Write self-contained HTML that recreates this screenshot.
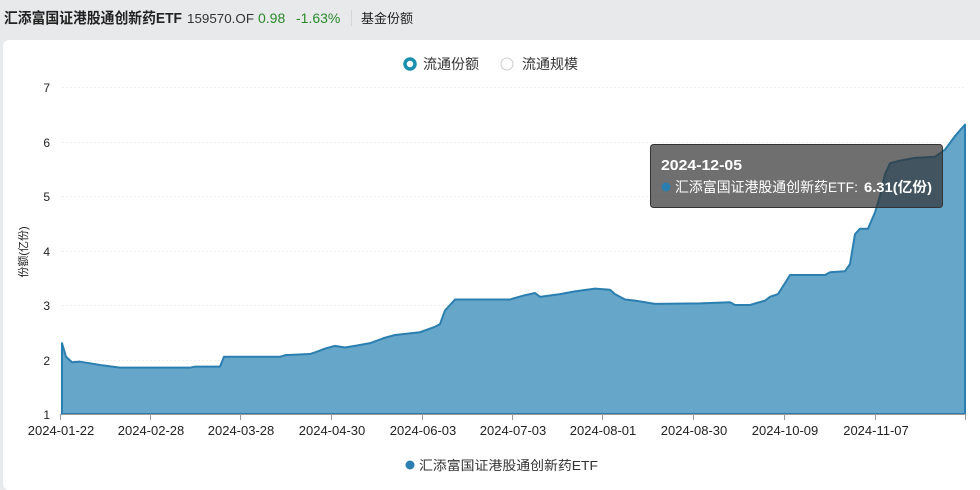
<!DOCTYPE html>
<html><head><meta charset="utf-8"><style>
*{margin:0;padding:0;box-sizing:border-box}
body{width:980px;height:480px;background:#e8e9eb;font-family:"Liberation Sans","Noto Sans CJK SC",sans-serif;position:relative;overflow:hidden}
.card{position:absolute;left:3px;top:40px;width:990px;height:450px;background:#fff;border-radius:6px}
</style></head><body>
<div class="card"></div>
<svg style="position:absolute;left:0;top:0" width="980" height="480" font-family="Liberation Sans,Noto Sans CJK SC,sans-serif">
<text x="4" y="23" font-size="15" font-weight="bold" fill="#222" textLength="178" lengthAdjust="spacingAndGlyphs">汇添富国证港股通创新药ETF</text>
<text x="187" y="23" font-size="13" fill="#333" textLength="67" lengthAdjust="spacingAndGlyphs">159570.OF</text>
<text x="258" y="23" font-size="14" fill="#2a8a2a">0.98</text>
<text x="296" y="23" font-size="14" fill="#2a8a2a">-1.63%</text>
<rect x="351" y="10" width="1" height="16" fill="#d6d6d6"/>
<text x="361" y="23" font-size="13" fill="#222">基金份额</text>
<circle cx="410" cy="64" r="5" fill="#fff" stroke="#1a8fb0" stroke-width="3.5"/>
<text x="423" y="69" font-size="14" fill="#333">流通份额</text>
<circle cx="507" cy="64" r="6" fill="#fff" stroke="#ccc" stroke-width="1"/>
<text x="522" y="69" font-size="14" fill="#333">流通规模</text>
<g stroke="#eee" stroke-dasharray="2,2" stroke-width="1">
<line x1="62" x2="965" y1="87.5" y2="87.5"/><line x1="62" x2="965" y1="142.5" y2="142.5"/><line x1="62" x2="965" y1="196.5" y2="196.5"/><line x1="62" x2="965" y1="251.5" y2="251.5"/><line x1="62" x2="965" y1="305.5" y2="305.5"/><line x1="62" x2="965" y1="360.5" y2="360.5"/>
</g>
<g font-size="12" fill="#222" text-anchor="end">
<text x="50" y="92">7</text><text x="50" y="147">6</text><text x="50" y="201">5</text><text x="50" y="256">4</text><text x="50" y="310">3</text><text x="50" y="365">2</text><text x="50" y="419">1</text>
</g>
<text transform="translate(27,252) rotate(-90)" font-size="11" fill="#222" text-anchor="middle">份额(亿份)</text>
<g transform="translate(0,414) scale(1,-54.5)">
<path fill="#66a6c9" stroke="#2a7fb0" stroke-width="2" vector-effect="non-scaling-stroke" stroke-linejoin="round" d="M62,0 L62,1.3 L66,1.05 L72,0.95 L80,0.96 L100,0.9 L120,0.85 L150,0.85 L190,0.85 L195,0.87 L220,0.87 L224,1.05 L280,1.05 L285,1.08 L310,1.1 L318,1.15 L325,1.2 L335,1.25 L345,1.22 L355,1.25 L370,1.3 L385,1.4 L395,1.45 L420,1.5 L435,1.6 L440,1.65 L445,1.9 L450,2.0 L455,2.1 L470,2.1 L510,2.1 L515,2.13 L525,2.18 L535,2.22 L540,2.15 L560,2.2 L575,2.25 L595,2.3 L610,2.28 L615,2.2 L625,2.1 L635,2.08 L645,2.05 L655,2.02 L700,2.03 L730,2.05 L735,2.0 L750,2.0 L765,2.08 L770,2.15 L778,2.2 L785,2.4 L790,2.55 L825,2.55 L830,2.6 L845,2.62 L850,2.75 L855,3.3 L860,3.4 L868,3.4 L875,3.7 L880,4.0 L885,4.4 L890,4.6 L900,4.65 L915,4.7 L935,4.72 L945,4.85 L955,5.1 L965,5.31 L965,0 Z"/>
</g>
<line x1="62" x2="965" y1="414.5" y2="414.5" stroke="#999"/>
<g stroke="#999"><line x1="60.5" x2="60.5" y1="414" y2="420"/><line x1="150.5" x2="150.5" y1="414" y2="420"/><line x1="240.5" x2="240.5" y1="414" y2="420"/><line x1="331.5" x2="331.5" y1="414" y2="420"/><line x1="422.5" x2="422.5" y1="414" y2="420"/><line x1="512.5" x2="512.5" y1="414" y2="420"/><line x1="602.5" x2="602.5" y1="414" y2="420"/><line x1="693.5" x2="693.5" y1="414" y2="420"/><line x1="784.5" x2="784.5" y1="414" y2="420"/><line x1="875.5" x2="875.5" y1="414" y2="420"/><line x1="965.5" x2="965.5" y1="414" y2="420"/></g>
<g font-size="13" fill="#222" text-anchor="middle">
<text x="61" y="435">2024-01-22</text><text x="151" y="435">2024-02-28</text><text x="241" y="435">2024-03-28</text><text x="332" y="435">2024-04-30</text><text x="423" y="435">2024-06-03</text><text x="513" y="435">2024-07-03</text><text x="603" y="435">2024-08-01</text><text x="694" y="435">2024-08-30</text><text x="785" y="435">2024-10-09</text><text x="876" y="435">2024-11-07</text>
</g>
<circle cx="410" cy="465" r="4.5" fill="#2a7fb0"/>
<text x="419" y="470" font-size="13" fill="#333" textLength="179" lengthAdjust="spacingAndGlyphs">汇添富国证港股通创新药ETF</text>
<rect x="650.5" y="144.5" width="292" height="63" rx="3" fill="rgba(50,50,50,0.7)" stroke="#333"/>
<text x="661" y="170" font-size="15" font-weight="bold" fill="#fff" textLength="81" lengthAdjust="spacingAndGlyphs">2024-12-05</text>
<circle cx="666" cy="187" r="4.5" fill="#2a7fb0"/>
<text x="675" y="192" font-size="14" fill="#fff" textLength="183" lengthAdjust="spacingAndGlyphs">汇添富国证港股通创新药ETF:</text>
<text x="864" y="192" font-size="14" font-weight="bold" fill="#fff" textLength="68" lengthAdjust="spacingAndGlyphs">6.31(亿份)</text>
</svg>
</body></html>
